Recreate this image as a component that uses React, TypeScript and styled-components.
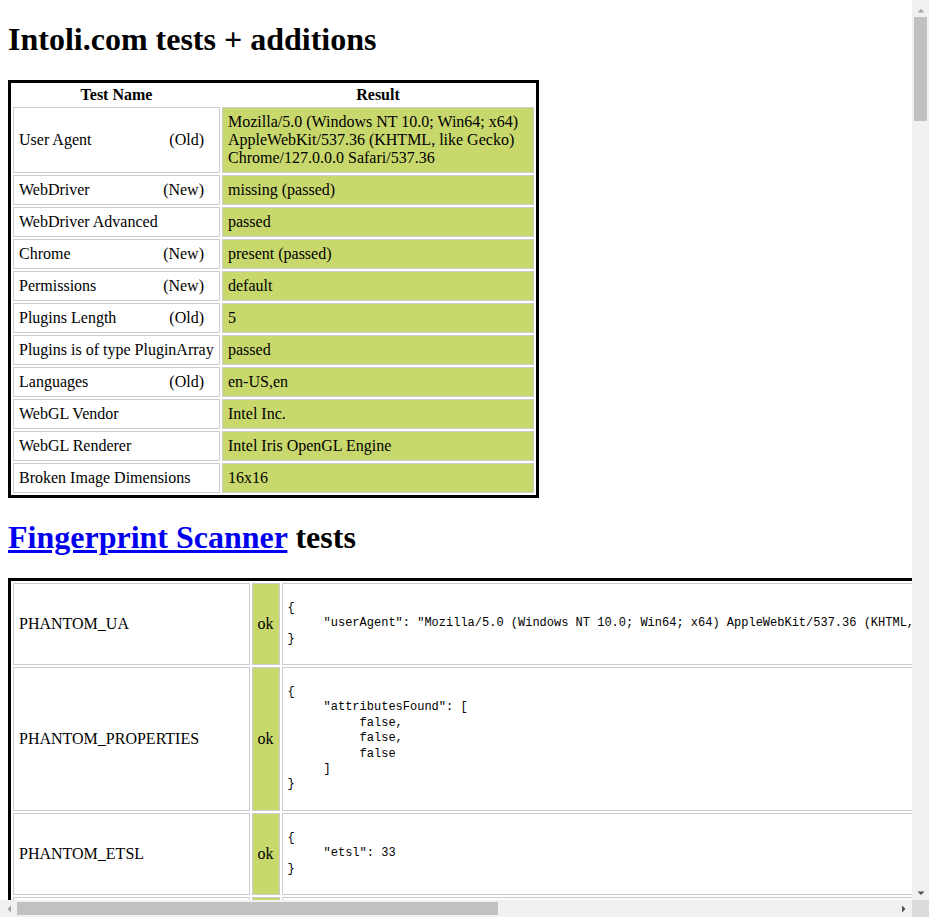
import React from 'react';
import styled, { createGlobalStyle } from 'styled-components';

const UA =
  'Mozilla/5.0 (Windows NT 10.0; Win64; x64) AppleWebKit/537.36 (KHTML, like Gecko) Chrome/127.0.0.0 Safari/537.36';

const GlobalStyle = createGlobalStyle`
  html { background: #fff; }
  body {
    margin: 0 8px 8px;
    font-family: "Liberation Serif", "Times New Roman", serif;
    font-size: 16px;
    color: #000;
  }
`;

const Heading = styled.h1`
  font-size: 32px;
  font-weight: bold;
  margin: 21.44px 0;
  line-height: normal;
`;

const Link = styled.a`
  color: #0000ee;
  text-decoration: underline;
`;

const Table = styled.table`
  border: 3px solid #000;
  border-spacing: 2px;
`;

const HeadCell = styled.th`
  font-weight: bold;
  padding: 1px;
  line-height: 18px;
  text-align: center;
`;

const Cell = styled.td<{ $passed?: boolean; $w?: number }>`
  border: 1px solid #ccc;
  padding: 5px;
  line-height: 18px;
  vertical-align: middle;
  background: ${(p) => (p.$passed ? '#c9d86d' : 'transparent')};
  ${(p) => (p.$w ? `width: ${p.$w}px;` : '')}
`;

const Tag = styled.span`
  float: right;
  margin-right: 10px;
`;

const Code = styled.pre`
  font-family: "Liberation Mono", "DejaVu Sans Mono", monospace;
  font-size: 12px;
  line-height: 15.4px;
  margin: 12px 0;
  white-space: pre;
`;

/* browser scrollbars, drawn over the page edge */
const VScroll = styled.div`
  position: fixed;
  top: 0;
  right: 0;
  bottom: 17px;
  width: 17px;
  background: #f1f1f1;
  display: flex;
  flex-direction: column;
  align-items: center;
`;

const HScroll = styled.div`
  position: fixed;
  left: 0;
  right: 17px;
  bottom: 0;
  height: 17px;
  background: #f1f1f1;
  display: flex;
  align-items: center;
`;

const Corner = styled.div`
  position: fixed;
  right: 0;
  bottom: 0;
  width: 17px;
  height: 17px;
  background: #dcdcdc;
`;

const ArrowBox = styled.div`
  width: 17px;
  height: 17px;
  flex: none;
  display: flex;
  align-items: center;
  justify-content: center;
`;

const VThumb = styled.div`
  width: 13px;
  height: 104px;
  background: #c1c1c1;
`;

const HThumb = styled.div`
  height: 13px;
  width: 481px;
  background: #c1c1c1;
`;

const Spacer = styled.div`
  flex: 1;
`;

const Arrow = ({ dir, color }: { dir: 'up' | 'down' | 'left' | 'right'; color: string }) => {
  const pts = {
    up: '0.5,7.5 4,4 7.5,7.5',
    down: '0.5,3.5 4,7 7.5,3.5',
    left: '6,0.5 2.5,4 6,7.5',
    right: '2,0.5 5.5,4 2,7.5',
  }[dir];
  return (
    <svg width="8" height="8" viewBox="0 0 8 8">
      <polygon points={pts} fill={color} />
    </svg>
  );
};

type Intoli = { name: string; tag?: string; value: string };

const intoli: Intoli[] = [
  { name: 'User Agent', tag: '(Old)', value: UA },
  { name: 'WebDriver', tag: '(New)', value: 'missing (passed)' },
  { name: 'WebDriver Advanced', value: 'passed' },
  { name: 'Chrome', tag: '(New)', value: 'present (passed)' },
  { name: 'Permissions', tag: '(New)', value: 'default' },
  { name: 'Plugins Length', tag: '(Old)', value: '5' },
  { name: 'Plugins is of type PluginArray', value: 'passed' },
  { name: 'Languages', tag: '(Old)', value: 'en-US,en' },
  { name: 'WebGL Vendor', value: 'Intel Inc.' },
  { name: 'WebGL Renderer', value: 'Intel Iris OpenGL Engine' },
  { name: 'Broken Image Dimensions', value: '16x16' },
];

const pluginNames = [
  'PDF Viewer',
  'Chrome PDF Viewer',
  'Chromium PDF Viewer',
  'Microsoft Edge PDF Viewer',
  'WebKit built-in PDF',
];

const scanner: { name: string; data: unknown }[] = [
  { name: 'PHANTOM_UA', data: { userAgent: UA } },
  { name: 'PHANTOM_PROPERTIES', data: { attributesFound: [false, false, false] } },
  { name: 'PHANTOM_ETSL', data: { etsl: 33 } },
  { name: 'PHANTOM_LANGUAGE', data: { languages: ['en-US', 'en'] } },
  {
    name: 'PHANTOM_WEBSOCKET',
    data: { error: "SyntaxError: Failed to construct 'WebSocket': The URL 'itsgonnafail' is invalid." },
  },
  { name: 'MQ_SCREEN', data: { screenMatchesMQ: true, screen: 'max-width: 1920px', mqScreen: true } },
  {
    name: 'PHANTOM_OVERFLOW',
    data: { depth: null, errorMessage: 'Maximum call stack size exceeded', errorName: 'RangeError', errorStacklength: 791 },
  },
  {
    name: 'PHANTOM_WINDOW_HEIGHT',
    data: {
      wInnerHeight: 917, wOuterHeight: 1032, wOuterWidth: 1920, wInnerWidth: 929,
      wScreenX: 0, wPageXOffset: 0, wPageYOffset: 0, cWidth: 912, cHeight: 917,
      sWidth: 1920, sHeight: 1080, sAvailWidth: 1920, sAvailHeight: 1032,
      sColorDepth: 24, sPixelDepth: 24, wDevicePixelRatio: 1,
    },
  },
  { name: 'HEADCHR_UA', data: { userAgent: UA } },
  { name: 'WEBDRIVER', data: { webdriver: false } },
  {
    name: 'HEADCHR_CHROME_OBJ',
    data: { isChrome: true, chromeObject: true },
  },
  { name: 'HEADCHR_PERMISSIONS', data: { state: 'prompt', permission: 'default' } },
  {
    name: 'HEADCHR_PLUGINS',
    data: {
      plugins: pluginNames.map((n) => ({
        name: n,
        filename: 'internal-pdf-viewer',
        description: 'Portable Document Format',
        length: 2,
      })),
    },
  },
  { name: 'HEADCHR_IFRAME', data: { iframeChrome: 'object' } },
  { name: 'CHR_DEBUG_TOOLS', data: { consoleDebug: false } },
  { name: 'SELENIUM_DRIVER', data: { selenium: Array.from({ length: 12 }, () => false) } },
  { name: 'CHR_BATTERY', data: { hasBattery: true } },
  { name: 'CHR_MEMORY', data: { memory: 8 } },
  { name: 'TRANSPARENT_PIXEL', data: { rgba: [0, 0, 0, 0], transparent: true } },
  { name: 'SEQUENTUM', data: { sequentum: false } },
  { name: 'VIDEO_CODECS', data: { ogg: 'probably', h264: 'probably', webm: 'probably' } },
];

export default function App() {
  return (
    <>
      <GlobalStyle />
      <Heading>Intoli.com tests + additions</Heading>
      <Table>
        <tbody>
          <tr>
            <HeadCell>Test Name</HeadCell>
            <HeadCell>Result</HeadCell>
          </tr>
          {intoli.map((r) => (
            <tr key={r.name}>
              <Cell $w={195}>
                {r.name} {r.tag && <Tag>{r.tag}</Tag>}
              </Cell>
              <Cell $passed $w={300}>
                {r.value}
              </Cell>
            </tr>
          ))}
        </tbody>
      </Table>
      <Heading>
        <Link href="#">Fingerprint Scanner</Link> tests
      </Heading>
      <Table>
        <tbody>
          {scanner.map((r) => (
            <tr key={r.name}>
              <Cell>{r.name}</Cell>
              <Cell $passed>ok</Cell>
              <Cell>
                <Code>{JSON.stringify(r.data, null, 5)}</Code>
              </Cell>
            </tr>
          ))}
        </tbody>
      </Table>

      <VScroll>
        <ArrowBox>
          <Arrow dir="up" color="#a3a3a3" />
        </ArrowBox>
        <VThumb />
        <Spacer />
        <ArrowBox>
          <Arrow dir="down" color="#505050" />
        </ArrowBox>
      </VScroll>
      <HScroll>
        <ArrowBox>
          <Arrow dir="left" color="#a3a3a3" />
        </ArrowBox>
        <HThumb />
        <Spacer />
        <ArrowBox>
          <Arrow dir="right" color="#505050" />
        </ArrowBox>
      </HScroll>
      <Corner />
    </>
  );
}
